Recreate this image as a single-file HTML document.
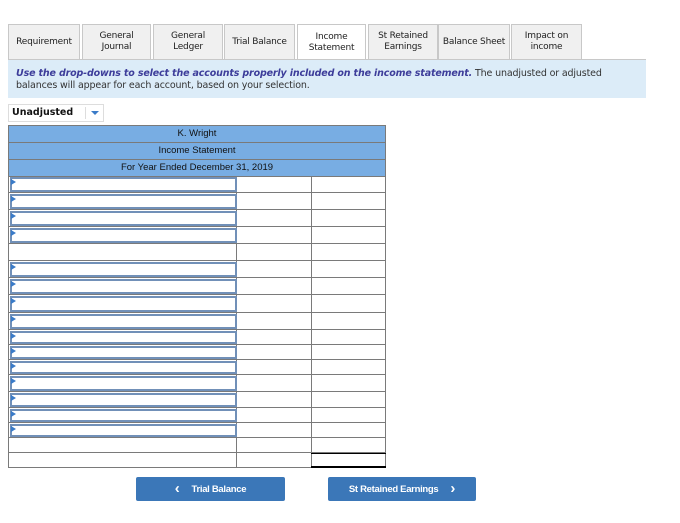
<!DOCTYPE html>
<html><head><meta charset="utf-8"><style>
*{box-sizing:border-box;margin:0;padding:0}
body{width:680px;height:523px;background:#fff;font-family:"Liberation Sans",Verdana,sans-serif;position:relative;overflow:hidden}
.a{position:absolute}
.tab{position:absolute;top:24px;height:35px;background:#f0f0f0;border:1px solid #c8c8c8;border-bottom:none;font-family:"DejaVu Sans",sans-serif;font-size:9px;color:#222;display:flex;align-items:center;justify-content:center;text-align:center;line-height:11px;letter-spacing:-0.2px}
.tab.on{background:#fff;height:36px}
.hd{position:absolute;left:8px;width:378px;background:#78ade3;border:1px solid #7a7a7a;font-size:9.5px;color:#111;text-align:center;line-height:15px}
.r{position:absolute;left:8px;width:378px;border-left:1px solid #7a7a7a;border-right:1px solid #7a7a7a;border-bottom:1px solid #7a7a7a}
.r:before{content:"";position:absolute;left:227px;top:0;bottom:0;border-left:1px solid #7a7a7a}
.r:after{content:"";position:absolute;left:302px;top:0;bottom:0;border-left:1px solid #7a7a7a}
.s{position:absolute;left:1px;width:227px;top:1px;bottom:0;border:2px solid #7190b8;background:#fff}
.s i{position:absolute;left:-1px;top:0;width:0;height:0;border-left:5px solid #3a7bc8;border-top:3px solid transparent;border-bottom:3px solid transparent}
.btn{position:absolute;top:477px;height:24px;background:#3b77b8;border-radius:2px;color:#fff;font-weight:bold;font-size:9.5px;display:flex;align-items:center;justify-content:center;letter-spacing:-0.3px}
.ch{font-size:15px;font-weight:bold;line-height:10px}
</style></head><body>
<div class="tab" style="left:8px;width:72px">Requirement</div>
<div class="tab" style="left:82px;width:69px">General<br>Journal</div>
<div class="tab" style="left:153px;width:70px">General<br>Ledger</div>
<div class="tab" style="left:224px;width:71px">Trial Balance</div>
<div class="tab on" style="left:297px;width:69px">Income<br>Statement</div>
<div class="tab" style="left:368px;width:70px">St Retained<br>Earnings</div>
<div class="tab" style="left:438px;width:72px">Balance Sheet</div>
<div class="tab" style="left:511px;width:71px">Impact on<br>income</div>
<div class="a" style="left:8px;top:59px;width:638px;height:39px;background:#dcecf8;border-top:1px solid #c8c8c8;padding:8px 8px 0 8px;font-family:'DejaVu Sans',sans-serif;font-size:9.5px;line-height:12px;color:#333;letter-spacing:-0.15px"><b style="color:#3d3d9a;font-style:italic">Use the drop-downs to select the accounts properly included on the income statement.</b> The unadjusted or adjusted balances will appear for each account, based on your selection.</div>
<div class="a" style="left:8px;top:104px;width:96px;height:18px;border:1px solid #ddd;font-family:'DejaVu Sans',sans-serif;font-weight:bold;font-size:9.5px;line-height:16px;padding-left:3px;color:#111">Unadjusted<span class="a" style="left:76px;top:2px;height:12px;border-left:1px solid #ddd"></span><span class="a" style="left:82px;top:6px;border-top:4px solid #3a7bc8;border-left:4px solid transparent;border-right:4px solid transparent"></span></div>
<div class="hd" style="top:125px;height:18px">K. Wright</div>
<div class="hd" style="top:142px;height:18px">Income Statement</div>
<div class="hd" style="top:159px;height:18px">For Year Ended December 31, 2019</div>
<div class="r" style="top:176px;height:17px"><div class="s"><i></i></div></div>
<div class="r" style="top:193px;height:17px"><div class="s"><i></i></div></div>
<div class="r" style="top:210px;height:17px"><div class="s"><i></i></div></div>
<div class="r" style="top:227px;height:17px"><div class="s"><i></i></div></div>
<div class="r" style="top:244px;height:17px"></div>
<div class="r" style="top:261px;height:17px"><div class="s"><i></i></div></div>
<div class="r" style="top:278px;height:17px"><div class="s"><i></i></div></div>
<div class="r" style="top:295px;height:18px"><div class="s"><i></i></div></div>
<div class="r" style="top:313px;height:17px"><div class="s"><i></i></div></div>
<div class="r" style="top:330px;height:15px"><div class="s"><i></i></div></div>
<div class="r" style="top:345px;height:15px"><div class="s"><i></i></div></div>
<div class="r" style="top:360px;height:15px"><div class="s"><i></i></div></div>
<div class="r" style="top:375px;height:17px"><div class="s"><i></i></div></div>
<div class="r" style="top:392px;height:16px"><div class="s"><i></i></div></div>
<div class="r" style="top:408px;height:15px"><div class="s"><i></i></div></div>
<div class="r" style="top:423px;height:15px"><div class="s"><i></i></div></div>
<div class="r" style="top:438px;height:15px"></div>
<div class="r" style="top:453px;height:15px"></div>
<div class="a" style="left:311px;top:453px;width:75px;height:15px;border-top:1px solid #000;border-bottom:2px solid #000"></div>
<div class="btn" style="left:136px;width:149px"><span class="ch" style="margin-right:12px">&#8249;</span>Trial Balance</div>
<div class="btn" style="left:328px;width:148px">St Retained Earnings<span class="ch" style="margin-left:12px">&#8250;</span></div>
</body></html>
